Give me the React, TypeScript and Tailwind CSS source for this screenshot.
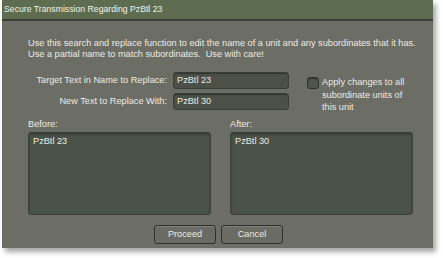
import React from 'react'

const font = { fontFamily: '"Liberation Sans", Arial, sans-serif' }

function Field({ label, value }: { label: string; value: string }) {
  return (
    <div className="flex items-center h-[17px]">
      <div className="w-[145px] pr-[6px] text-right whitespace-nowrap">{label}</div>
      <div className="w-[116px] h-[17px] rounded-[3px] bg-[#4b5049] border border-[#3a3d37] shadow-[inset_0_1px_1px_rgba(0,0,0,0.35)] px-[3px] leading-[15px]">
        {value}
      </div>
    </div>
  )
}

function Pane({ title, value }: { title: string; value: string }) {
  return (
    <div className="flex flex-col w-[183px]">
      <div className="h-[12px] leading-[12px]">{title}</div>
      <div className="mt-[2px] h-[83px] rounded-[3px] bg-[#4a5149] border border-[#3c4039] shadow-[inset_0_1px_2px_rgba(0,0,0,0.35)] px-[4px] pt-[2px] leading-[13px]">
        {value}
      </div>
    </div>
  )
}

export default function App() {
  return (
    <div className="w-[443px] h-[258px] bg-white" style={font}>
      <div className="ml-[2px] w-[431px] h-[248px] flex flex-col shadow-[3px_4px_5px_rgba(0,0,0,0.35)] text-[9.2px] text-[#ecece4]">
        <div className="h-[19px] bg-[#5e6d50] pl-[2px] text-[8.7px] leading-[19px] text-[#f2f2ea]">
          Secure Transmission Regarding PzBtl 23
        </div>
        <div className="h-[2px] bg-[#3e413a]" />
        <div className="flex-1 bg-[#6c6d65] pl-[26px] pt-[17px]">
          <div className="leading-[10.5px] whitespace-nowrap">
            <div>Use this search and replace function to edit the name of a unit and any subordinates that it has.</div>
            <div>Use a partial name to match subordinates.&nbsp; Use with care!</div>
          </div>
          <div className="flex mt-[13px]">
            <div className="flex flex-col gap-[4px]">
              <Field label="Target Text in Name to Replace:" value="PzBtl 23" />
              <Field label="New Text to Replace With:" value="PzBtl 30" />
            </div>
            <div className="flex ml-[18px] pt-[4px]">
              <div className="w-[12px] h-[12px] mt-[1px] rounded-[3px] bg-[#50544c] border border-[#2f312c] shadow-[inset_0_1px_1px_rgba(0,0,0,0.4)]" />
              <div className="ml-[3px] leading-[12.5px] whitespace-nowrap">
                Apply changes to all<br />subordinate units of<br />this unit
              </div>
            </div>
          </div>
          <div className="flex gap-[19px] mt-[4px]">
            <Pane title="Before:" value="PzBtl 23" />
            <Pane title="After:" value="PzBtl 30" />
          </div>
          <div className="flex justify-center gap-[5px] mt-[10px] pr-[24px]">
            <div className="w-[62px] h-[19px] rounded-[3px] border border-[#2e302b] bg-[#6a6b63] shadow-[inset_0_1px_0_rgba(255,255,255,0.15)] text-center leading-[17px]">Proceed</div>
            <div className="w-[62px] h-[19px] rounded-[3px] border border-[#2e302b] bg-[#6a6b63] shadow-[inset_0_1px_0_rgba(255,255,255,0.15)] text-center leading-[17px]">Cancel</div>
          </div>
        </div>
      </div>
    </div>
  )
}
